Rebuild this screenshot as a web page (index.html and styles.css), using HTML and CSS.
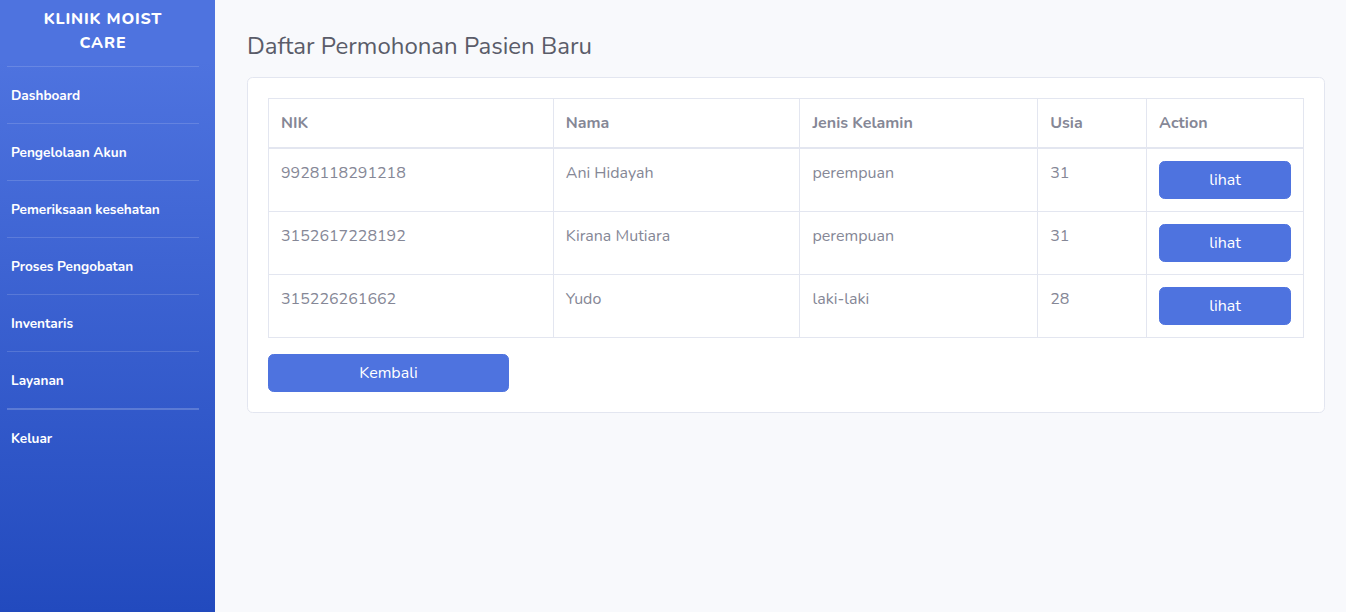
FILE: index.html
```html
<!DOCTYPE html>
<html lang="id">
<head>
<meta charset="utf-8">
<title>Daftar Permohonan Pasien Baru</title>
<link rel="stylesheet" href="styles.css">
</head>
<body>
<div class="wrapper">
  <nav class="sidebar">
    <div class="brand">KLINIK MOIST<br>CARE</div>
    <hr class="divider">
    <a class="nav-link" href="#">Dashboard</a>
    <hr class="divider">
    <a class="nav-link" href="#">Pengelolaan Akun</a>
    <hr class="divider">
    <a class="nav-link" href="#">Pemeriksaan kesehatan</a>
    <hr class="divider">
    <a class="nav-link" href="#">Proses Pengobatan</a>
    <hr class="divider">
    <a class="nav-link" href="#">Inventaris</a>
    <hr class="divider">
    <a class="nav-link" href="#">Layanan</a>
    <hr class="divider divider-strong">
    <a class="nav-link" href="#">Keluar</a>
  </nav>
  <main class="content">
    <h1 class="page-title">Daftar Permohonan Pasien Baru</h1>
    <div class="card">
      <table class="table">
        <thead>
          <tr>
            <th class="c-nik">NIK</th>
            <th class="c-nama">Nama</th>
            <th class="c-jk">Jenis Kelamin</th>
            <th class="c-usia">Usia</th>
            <th class="c-act">Action</th>
          </tr>
        </thead>
        <tbody>
          <tr>
            <td>9928118291218</td>
            <td>Ani Hidayah</td>
            <td>perempuan</td>
            <td>31</td>
            <td><a class="btn btn-block" href="#">lihat</a></td>
          </tr>
          <tr>
            <td>3152617228192</td>
            <td>Kirana Mutiara</td>
            <td>perempuan</td>
            <td>31</td>
            <td><a class="btn btn-block" href="#">lihat</a></td>
          </tr>
          <tr>
            <td>315226261662</td>
            <td>Yudo</td>
            <td>laki-laki</td>
            <td>28</td>
            <td><a class="btn btn-block" href="#">lihat</a></td>
          </tr>
        </tbody>
      </table>
      <a class="btn btn-back" href="#">Kembali</a>
    </div>
  </main>
</div>
</body>
</html>
```

FILE: styles.css
```css
* { box-sizing: border-box; }
html, body { margin: 0; padding: 0; height: 100%; }
body {
  font-family: "Nunito", "Lato", "Noto Sans", sans-serif;
  font-size: 16px;
  line-height: 1.5;
  color: #858796;
  background: #f8f9fc;
}
.wrapper { display: flex; min-height: 612px; }
.sidebar {
  width: 215px;
  flex: 0 0 215px;
  background: linear-gradient(180deg, #4e73df 10%, #224abe 100%);
  display: flex;
  flex-direction: column;
  padding: 7px 16px 0 7px;
  min-height: 612px;
}
.brand {
  color: #fff;
  font-weight: 800;
  font-size: 16px;
  letter-spacing: 0.05rem;
  line-height: 24px;
  text-align: center;
  height: 59px;
}
.divider {
  margin: 0;
  border: 0;
  border-top: 1px solid rgba(255,255,255,0.15);
  width: 192px;
}
.divider-strong { border-top: 2px solid rgba(255,255,255,0.2); }
.nav-link {
  display: block;
  color: #fff;
  text-decoration: none;
  font-weight: 700;
  font-size: 13.6px;
  line-height: 20px;
  padding: 19px 4px 17px 4px;
  height: 56px;
}
.content {
  flex: 1;
  padding: 30px 21px 24px 32px;
}
.page-title {
  margin: 0 0 14px 0;
  font-size: 24px;
  font-weight: 400;
  line-height: 33px;
  color: #5a5c69;
}
.card {
  background: #fff;
  border: 1px solid #e3e6f0;
  border-radius: 5.6px;
  padding: 20px;
}
.table {
  width: 100%;
  border-collapse: collapse;
  color: #858796;
}
.table th, .table td {
  border: 1px solid #e3e6f0;
  padding: 12px;
  text-align: left;
  vertical-align: top;
  line-height: 24px;
}
.table thead th {
  border-bottom: 2px solid #e3e6f0;
  font-weight: 700;
  vertical-align: bottom;
}
.c-nik { width: 285px; }
.c-nama { width: 247px; }
.c-jk { width: 238px; }
.c-usia { width: 109px; }
.c-act { width: 157px; }
.btn {
  display: inline-block;
  background: #4e73df;
  border: 1px solid #4e73df;
  color: #fff;
  text-decoration: none;
  text-align: center;
  font-size: 16px;
  line-height: 24px;
  padding: 6px 12px;
  border-radius: 5.6px;
}
.btn-block { display: block; width: 100%; }
.btn-back { width: 241px; margin-top: 16px; }
```
